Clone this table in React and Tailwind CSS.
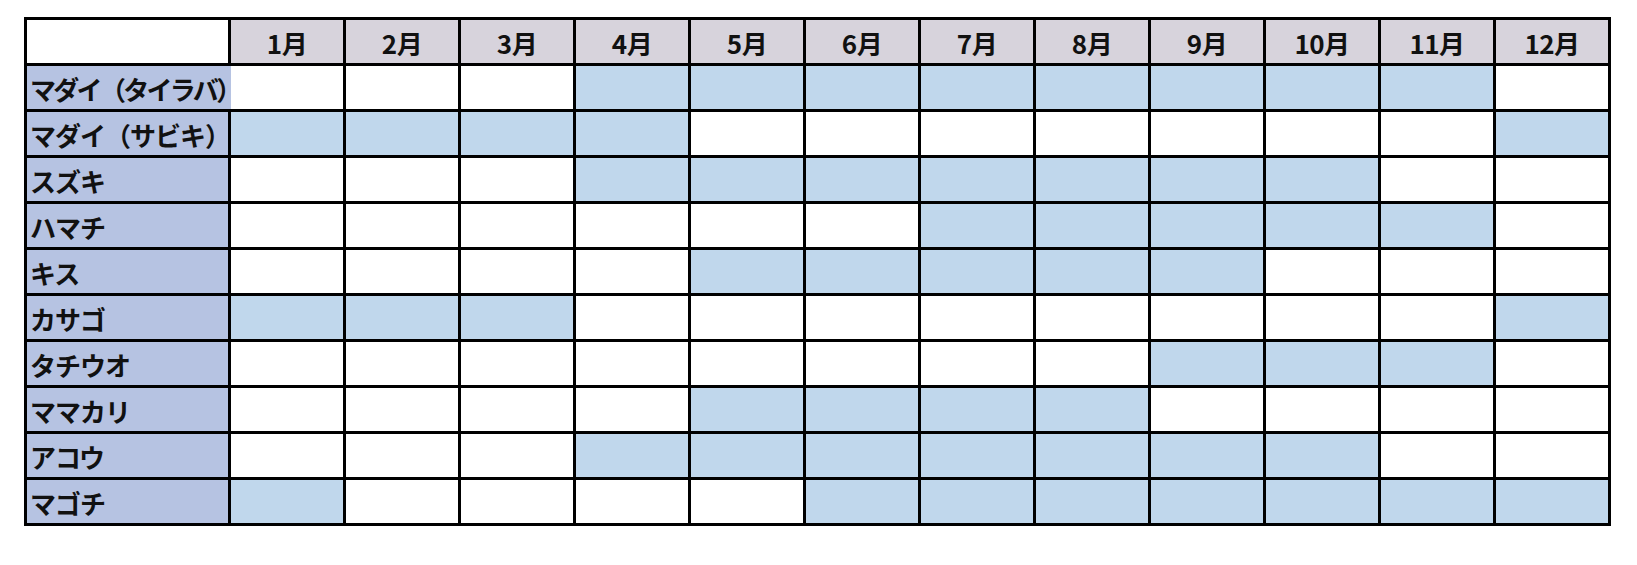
const months = ['1月', '2月', '3月', '4月', '5月', '6月', '7月', '8月', '9月', '10月', '11月', '12月']

// months (1-12) in season for each fish
const fish = [
  { name: 'マダイ（タイラバ）', on: [4, 5, 6, 7, 8, 9, 10, 11] },
  { name: 'マダイ（サビキ）', on: [1, 2, 3, 4, 12] },
  { name: 'スズキ', on: [4, 5, 6, 7, 8, 9, 10] },
  { name: 'ハマチ', on: [7, 8, 9, 10, 11] },
  { name: 'キス', on: [5, 6, 7, 8, 9] },
  { name: 'カサゴ', on: [1, 2, 3, 12] },
  { name: 'タチウオ', on: [9, 10, 11] },
  { name: 'ママカリ', on: [5, 6, 7, 8] },
  { name: 'アコウ', on: [4, 5, 6, 7, 8, 9, 10] },
  { name: 'マゴチ', on: [1, 6, 7, 8, 9, 10, 11, 12] },
]

export default function App() {
  return (
    <div
      className="min-h-[565px] bg-white pl-[24px] pt-[17px] text-[#111] font-bold"
      style={{ fontFamily: '"Noto Sans CJK JP", "Noto Sans", sans-serif' }}
    >
      <div className="grid w-fit grid-cols-[201px_repeat(12,112px)] auto-rows-[43px] gap-[3px] bg-black p-[3px]">
        {/* Header */}
        <div className="bg-white" />
        {months.map((m) => (
          <div
            key={m}
            className="flex items-center justify-center bg-[#d7d3dc] pt-[2px] text-[26px] leading-none tracking-[-0.5px]"
          >
            {m}
          </div>
        ))}

        {/* Rows */}
        {fish.map((f, i) => (
          <FishRow key={f.name} fish={f} overflow={i === 0} />
        ))}
      </div>
    </div>
  )
}

function FishRow({ fish, overflow }) {
  // the first label is long enough to run over its right border, as in the sheet
  return (
    <>
      <div
        className={
          'relative z-10 flex items-center whitespace-nowrap bg-[#b6c3e2] pl-[3px] pt-[2px] text-[26px] leading-none ' +
          (overflow ? 'mr-[-3px] tracking-[-2.7px]' : 'tracking-[-1px]')
        }
      >
        {fish.name}
      </div>
      {months.map((m, idx) => (
        <div key={m} className={fish.on.includes(idx + 1) ? 'bg-[#c0d7ec]' : 'bg-white'} />
      ))}
    </>
  )
}
